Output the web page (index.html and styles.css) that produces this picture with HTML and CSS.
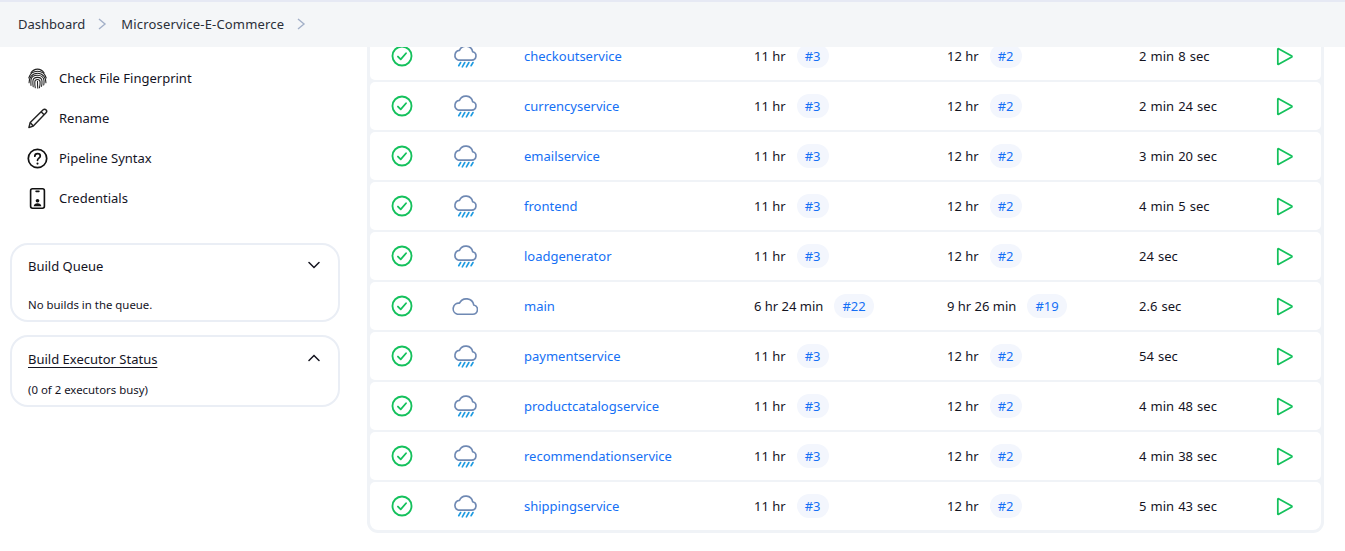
FILE: index.html
```html
<!DOCTYPE html>
<html>
<head>
  <meta charset="utf-8">
  <title>Microservice-E-Commerce</title>
  <link rel="stylesheet" href="styles.css">
</head>
<body>
  <svg class="defs" width="0" height="0">
    <symbol id="i-ok" viewBox="0 0 24 24">
      <circle cx="12" cy="12" r="10.400" fill="none" stroke="currentColor" stroke-width="2"/>
      <path d="M7.600 12.600l3 3 5.800-6.600" fill="none" stroke="currentColor" stroke-width="2" stroke-linecap="round" stroke-linejoin="round"/>
    </symbol>
    <symbol id="i-rain" viewBox="0 0 24 24">
      <path d="M5.600 15.800h12.600a3.900 3.900 0 0 0 .9-7.700 6.400 6.400 0 0 0-12.200-1.300 4.700 4.700 0 0 0-1.300 9z" fill="none" stroke="#6f89b3" stroke-width="1.500" stroke-linejoin="round"/>
      <path d="M8 18l-1.800 3M11.800 18l-2.300 4M15.600 18l-2.300 4M19.400 18l-1.800 3" fill="none" stroke="#1d9be2" stroke-width="1.500" stroke-linecap="round"/>
    </symbol>
    <symbol id="i-cloud" viewBox="0 0 24 24">
      <path d="M5 19.600h14.200a4.300 4.300 0 0 0 .9-8.500 7 7 0 0 0-13.200-1.700 5.200 5.200 0 0 0-1.900 10.200z" fill="none" stroke="#6f89b3" stroke-width="1.500" stroke-linejoin="round"/>
    </symbol>
    <symbol id="i-play" viewBox="0 0 24 24">
      <path d="M5.500 3.600v16.800a.6.6 0 0 0 .9.5l15-8.400a.6.6 0 0 0 0-1L6.400 3.100a.6.6 0 0 0-.9.5z" fill="none" stroke="currentColor" stroke-width="2" stroke-linejoin="round"/>
    </symbol>
  </svg>

  <header class="crumbs">
    <a class="crumb">Dashboard</a>
    <svg class="crumb-sep" viewBox="0 0 10 14"><path d="M2 2l6 5-6 5"/></svg>
    <a class="crumb crumb-job">Microservice-E-Commerce</a>
    <svg class="crumb-sep" viewBox="0 0 10 14"><path d="M2 2l6 5-6 5"/></svg>
  </header>

  <main class="page">
    <aside class="side">
      <nav class="tasks">
        <a class="task">
          <svg class="task-icon" viewBox="0 0 24 24" fill="none" stroke="#222" stroke-width="1.100" stroke-linecap="round">
            <path d="M5 6.200C7 3.400 9.300 2.200 12 2.200s5 1.200 7 4"/>
            <path d="M2.900 11.500C4.200 7 7.600 4.400 12 4.400s7.800 2.600 9.100 7.100"/>
            <path d="M3.200 16.500C3 11 6.400 6.600 12 6.600s9 4.400 8.800 9.900"/>
            <path d="M5.200 19.200C5 17 5.100 15 5.200 13.400 5.600 10.600 8.400 8.700 12 8.700s6.600 2.100 6.800 5.600c.1 1.400 0 2.900-.3 4.500"/>
            <path d="M7.500 20.600c-.3-2.200-.4-4.300-.3-6 .2-2.200 2.300-3.800 4.800-3.800s4.600 1.600 4.700 4c.1 1.900-.1 3.700-.5 5.400"/>
            <path d="M9.700 21.700c-.4-2.100-.6-4.200-.5-6.300.1-1.300 1.300-2.400 2.800-2.400s2.600 1.100 2.700 2.500c.1 2.300-.2 4.400-.7 6.200"/>
            <path d="M12 15v1.500c0 2 .1 3.800.3 5.600"/>
          </svg>
          Check File Fingerprint
        </a>
        <a class="task">
          <svg class="task-icon" viewBox="0 0 24 24" fill="none" stroke="#222" stroke-width="1.500" stroke-linejoin="round">
            <path d="M3 21.500l1.400-5.300L17.900 2.900c.9-.9 2.200-.8 3 .1.800.8.900 2.100 0 3L7.600 19.800z"/>
            <path d="M15.800 5l3.100 3.100M4.400 16.200l3.200 3.600"/>
          </svg>
          Rename
        </a>
        <a class="task">
          <svg class="task-icon" viewBox="0 0 24 24" fill="none" stroke="#111" stroke-width="1.800" stroke-linecap="round">
            <circle cx="12" cy="12" r="9.600"/>
            <path d="M9.200 9.600c0-1.700 1.200-2.700 2.900-2.700 1.600 0 2.800 1 2.800 2.400 0 2.200-2.900 2.300-2.900 4.600"/>
            <path d="M12 17.200v.1" stroke-width="2.200"/>
          </svg>
          Pipeline Syntax
        </a>
        <a class="task">
          <svg class="task-icon" viewBox="0 0 24 24" fill="none" stroke="#111" stroke-width="1.700">
            <rect x="4.800" y="1.800" width="14.400" height="20.400" rx="2"/>
            <path d="M10.500 4.500h3" stroke-linecap="round"/>
            <circle cx="12" cy="14.400" r="1.900" fill="#111" stroke="none"/>
            <path d="M8 20.200c.2-2 1.900-3.200 4-3.200s3.800 1.200 4 3.200z" fill="#111" stroke="none"/>
          </svg>
          Credentials
        </a>
      </nav>

      <section class="pane pane-queue">
        <div class="pane-head">
          <span>Build Queue</span>
          <svg class="chev" viewBox="0 0 12 8"><path d="M1 1.500l5 5 5-5"/></svg>
        </div>
        <p class="pane-text">No builds in the queue.</p>
      </section>

      <section class="pane pane-exec">
        <div class="pane-head">
          <a class="pane-link">Build Executor Status</a>
          <svg class="chev" viewBox="0 0 12 8"><path d="M1 6.500l5-5 5 5"/></svg>
        </div>
        <p class="pane-text">(0 of 2 executors busy)</p>
      </section>
    </aside>

    <section class="jobs">
      <div class="job">
        <svg class="ok"><use href="#i-ok"/></svg><svg class="wx"><use href="#i-rain"/></svg>
        <a class="job-name">checkoutservice</a>
        <span class="when">11 hr <a class="tag">#3</a></span>
        <span class="when">12 hr <a class="tag">#2</a></span>
        <span class="dur">2 min 8 sec</span>
        <svg class="run"><use href="#i-play"/></svg>
      </div>
      <div class="job">
        <svg class="ok"><use href="#i-ok"/></svg><svg class="wx"><use href="#i-rain"/></svg>
        <a class="job-name">currencyservice</a>
        <span class="when">11 hr <a class="tag">#3</a></span>
        <span class="when">12 hr <a class="tag">#2</a></span>
        <span class="dur">2 min 24 sec</span>
        <svg class="run"><use href="#i-play"/></svg>
      </div>
      <div class="job">
        <svg class="ok"><use href="#i-ok"/></svg><svg class="wx"><use href="#i-rain"/></svg>
        <a class="job-name">emailservice</a>
        <span class="when">11 hr <a class="tag">#3</a></span>
        <span class="when">12 hr <a class="tag">#2</a></span>
        <span class="dur">3 min 20 sec</span>
        <svg class="run"><use href="#i-play"/></svg>
      </div>
      <div class="job">
        <svg class="ok"><use href="#i-ok"/></svg><svg class="wx"><use href="#i-rain"/></svg>
        <a class="job-name">frontend</a>
        <span class="when">11 hr <a class="tag">#3</a></span>
        <span class="when">12 hr <a class="tag">#2</a></span>
        <span class="dur">4 min 5 sec</span>
        <svg class="run"><use href="#i-play"/></svg>
      </div>
      <div class="job">
        <svg class="ok"><use href="#i-ok"/></svg><svg class="wx"><use href="#i-rain"/></svg>
        <a class="job-name">loadgenerator</a>
        <span class="when">11 hr <a class="tag">#3</a></span>
        <span class="when">12 hr <a class="tag">#2</a></span>
        <span class="dur">24 sec</span>
        <svg class="run"><use href="#i-play"/></svg>
      </div>
      <div class="job">
        <svg class="ok"><use href="#i-ok"/></svg><svg class="wx"><use href="#i-cloud"/></svg>
        <a class="job-name">main</a>
        <span class="when">6 hr 24 min <a class="tag">#22</a></span>
        <span class="when">9 hr 26 min <a class="tag">#19</a></span>
        <span class="dur">2.6 sec</span>
        <svg class="run"><use href="#i-play"/></svg>
      </div>
      <div class="job">
        <svg class="ok"><use href="#i-ok"/></svg><svg class="wx"><use href="#i-rain"/></svg>
        <a class="job-name">paymentservice</a>
        <span class="when">11 hr <a class="tag">#3</a></span>
        <span class="when">12 hr <a class="tag">#2</a></span>
        <span class="dur">54 sec</span>
        <svg class="run"><use href="#i-play"/></svg>
      </div>
      <div class="job">
        <svg class="ok"><use href="#i-ok"/></svg><svg class="wx"><use href="#i-rain"/></svg>
        <a class="job-name">productcatalogservice</a>
        <span class="when">11 hr <a class="tag">#3</a></span>
        <span class="when">12 hr <a class="tag">#2</a></span>
        <span class="dur">4 min 48 sec</span>
        <svg class="run"><use href="#i-play"/></svg>
      </div>
      <div class="job">
        <svg class="ok"><use href="#i-ok"/></svg><svg class="wx"><use href="#i-rain"/></svg>
        <a class="job-name">recommendationservice</a>
        <span class="when">11 hr <a class="tag">#3</a></span>
        <span class="when">12 hr <a class="tag">#2</a></span>
        <span class="dur">4 min 38 sec</span>
        <svg class="run"><use href="#i-play"/></svg>
      </div>
      <div class="job">
        <svg class="ok"><use href="#i-ok"/></svg><svg class="wx"><use href="#i-rain"/></svg>
        <a class="job-name">shippingservice</a>
        <span class="when">11 hr <a class="tag">#3</a></span>
        <span class="when">12 hr <a class="tag">#2</a></span>
        <span class="dur">5 min 43 sec</span>
        <svg class="run"><use href="#i-play"/></svg>
      </div>
    </section>
  </main>
</body>
</html>
```

FILE: styles.css
```css
html, body {
  height: 100%;
  overflow: hidden;
}

body {
  background-color: #fff;
  color: #14141f;
  font-family: "Noto Sans", "Open Sans", sans-serif;
  font-size: 13px;
  margin: 0;
}

.defs {
  display: block;
  height: 0;
}

/* breadcrumb bar sits over the scrolled page */
.crumbs {
  align-items: center;
  background-color: #f4f6f8;
  border-top: 2px solid #e6e9f4;
  box-sizing: border-box;
  display: flex;
  gap: 12px;
  height: 47px;
  left: 0;
  padding: 0 0 2px 18px;
  position: absolute;
  right: 0;
  top: 0;
  z-index: 2;
}
.crumb {
  color: #2a2f38;
}
.crumb-job {
  letter-spacing: .18px;
}
.crumb-sep {
  fill: none;
  height: 14px;
  margin-right: 2px;
  stroke: #a3b0c8;
  stroke-width: 1.4;
  width: 10px;
}

.page {
  display: flex;
  padding-top: 31px;
}

.side {
  box-sizing: border-box;
  flex: none;
  padding: 27px 0 0 10px;
  width: 367px;
}

.tasks {
  display: flex;
  flex-direction: column;
  margin-bottom: 25px;
}
.task {
  align-items: center;
  display: flex;
  gap: 10px;
  height: 40px;
  padding-left: 16px;
}
.task-icon {
  flex: none;
  height: 23px;
  width: 23px;
}

.pane {
  border: 2px solid #eaeef5;
  border-radius: 18px;
  box-sizing: border-box;
  margin-bottom: 13px;
  padding: 0 16px;
  width: 330px;
}
.pane-queue {
  height: 79px;
}
.pane-exec {
  height: 72px;
}
.pane-head {
  align-items: center;
  display: flex;
  justify-content: space-between;
  padding-top: 12px;
}
.pane-exec .pane-head {
  padding-top: 13px;
}
.pane-link {
  text-decoration: underline;
  text-underline-offset: 3px;
}
.chev {
  fill: none;
  height: 8px;
  margin: 0 2px 3px 0;
  stroke: #14141f;
  stroke-linecap: round;
  stroke-width: 1.5;
  width: 12px;
}
.pane-text {
  font-size: 11.4px;
  line-height: 17px;
  margin: 0;
}
.pane-queue .pane-text {
  padding-top: 21px;
}
.pane-exec .pane-text {
  padding-top: 13px;
}

.jobs {
  background-color: #f0f3f7;
  border-radius: 0 0 11px 11px;
  box-sizing: border-box;
  display: flex;
  flex-direction: column;
  gap: 2px;
  padding: 1px 3px 3px;
  width: 957px;
}
.job {
  align-items: center;
  background-color: #fff;
  border-radius: 5px;
  display: grid;
  grid-template-columns: 64px 62px 258px 193px 192px 132px 24px;
  height: 48px;
}
.job:last-child {
  border-radius: 5px 5px 8px 8px;
}
.ok {
  color: #14c15c;
  height: 22px;
  justify-self: center;
  width: 22px;
}
.wx {
  height: 26px;
  justify-self: center;
  width: 26px;
}
.job-name {
  color: #1570f5;
  margin-left: 28px;
}
.when {
  align-items: center;
  display: flex;
  gap: 11px;
}
.dur {
  word-spacing: .7px;
}
.tag {
  background-color: #f3f6fd;
  border-radius: 12px;
  color: #1570f5;
  line-height: 24px;
  padding: 0 8px;
}
.run {
  color: #14c15c;
  height: 21px;
  margin-left: 2px;
  width: 21px;
}
```
